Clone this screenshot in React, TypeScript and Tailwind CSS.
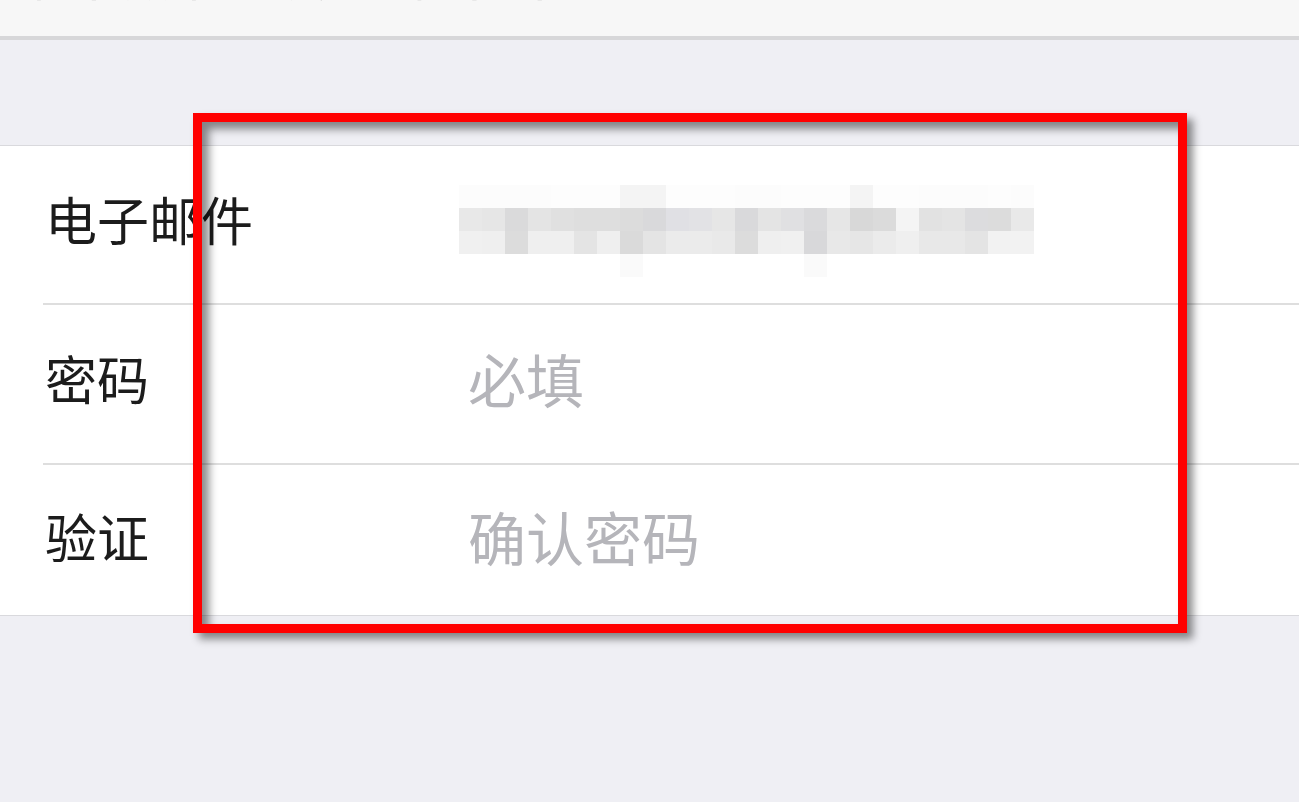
const cell = 23;

// pixelated (mosaic) email address, one colour per block
const mosaic: string[][] = [
  ["#fcfcfc","#fcfcfc","#fcfcfc","#fcfcfc","#fdfdfd","#fdfdfd","#fdfdfd","#f4f4f4","#f4f4f4","#fdfdfd","#fdfdfd","#fdfdfd","#fcfcfc","#fcfcfc","#fdfdfd","#fdfdfd","#fdfdfd","#f4f4f4","#fdfdfd","#fdfdfd","#fcfcfc","#fcfcfc","#fcfcfc","#fdfdfd","#fcfcfc"],
  ["#e8e8e8","#e6e6e6","#dadadb","#e4e4e4","#e0e0e0","#dedede","#dedede","#dcdcdc","#d9d9db","#e0e0e4","#e2e2e5","#e6e6e6","#d9d9db","#e4e4e4","#e0e0e2","#dadadc","#e6e6e6","#d8d8d8","#dbdbdb","#f4f4f4","#e2e2e2","#e4e4e4","#dcdcde","#dcdcdc","#e9e9e9"],
  ["#f0f0f0","#efefef","#dcdcdc","#efefef","#efefef","#e4e4e4","#efefef","#dadada","#e4e4e4","#ebebeb","#ebebeb","#e9e9e9","#dcdcdc","#efefef","#f0f0f0","#d8d8da","#e8e8e8","#e6e6e6","#ebebeb","#efefef","#e8e8e8","#e8e8e8","#e4e4e4","#f2f2f2","#f2f2f2"],
  ["#fff","#fff","#fff","#fff","#fff","#fff","#fff","#fafafa","#fff","#fff","#fff","#fff","#fff","#fff","#fff","#fafafa","#fff","#fff","#fff","#fff","#fff","#fff","#fff","#fff","#fff"],
];

function Mosaic() {
  return (
    <svg width={cell * 25} height={cell * 4} className="shrink-0 -ml-[9px] mt-[24px]">
      {mosaic.map((row, r) =>
        row.map((c, i) => (
          <rect key={r + "-" + i} x={i * cell} y={r * cell} width={cell} height={cell} fill={c} />
        ))
      )}
    </svg>
  );
}

export default function App() {
  return (
    <div className="relative w-full h-[802px] overflow-hidden bg-[#efeff4] font-['Noto_Sans_CJK_SC',sans-serif]">
      {/* nav bar, title cut off at the top */}
      <div className="h-[40px] bg-[#f7f7f7] border-b-[4px] border-[#d7d7d9] overflow-hidden">
        <p className="-mt-[59px] pl-[2px] text-[56px] leading-[60px] text-[#c4c4c4] whitespace-nowrap">
          邮件激活 - 设置邮件密码
        </p>
      </div>

      {/* form table */}
      <div className="mt-[105px] bg-white border-y border-[#d9d9dd]">
        <div className="ml-[43px]">
          <div className="flex items-center h-[157px] pb-[12px]">
            <span className="w-[425px] pl-[2px] text-[52px] text-[#1c1c1c]">电子邮件</span>
            <Mosaic />
          </div>
          <div className="flex items-center h-[160px] pb-[12px] border-t-2 border-[#dedede]">
            <span className="w-[425px] pl-[2px] text-[52px] text-[#1c1c1c]">密码</span>
            <span className="text-[58px] text-[#b5b5ba]">必填</span>
          </div>
          <div className="flex items-center h-[152px] pb-[8px] border-t-2 border-[#dedede]">
            <span className="w-[425px] pl-[2px] text-[52px] text-[#1c1c1c]">验证</span>
            <span className="text-[58px] text-[#b5b5ba]">确认密码</span>
          </div>
        </div>
      </div>

      {/* red highlight frame */}
      <div className="absolute left-[193px] top-[113px] w-[994px] h-[520px] border-[9px] border-[#ff0000] pointer-events-none shadow-[inset_7px_7px_9px_rgba(0,0,0,0.45),6px_6px_8px_rgba(0,0,0,0.45)]" />
    </div>
  );
}
